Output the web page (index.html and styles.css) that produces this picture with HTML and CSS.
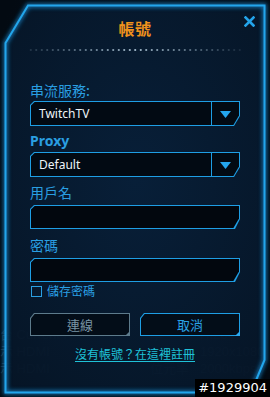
FILE: index.html
```html
<!DOCTYPE html>
<html>
<head>
<meta charset="utf-8">
<link rel="stylesheet" href="styles.css">
</head>
<body>
<div class="screen">
  <div class="backdrop">
    <div class="bg-row"><span>台 Current P</span><span>率</span><span>H.264</span></div>
    <div class="bg-row"><span>示 HDMI</span><span></span><span>1920x1080</span></div>
    <div class="bg-row"><span>示 HDMI</span><span>位元率</span><span>2000kbps</span></div>
  </div>

  <div class="dialog">
    <svg class="frame" width="262" height="390" viewBox="0 0 262 390">
      <defs>
        <filter id="glow" x="-10%" y="-10%" width="120%" height="120%">
          <feGaussianBlur stdDeviation="2.2"/>
        </filter>
        <radialGradient id="fill" cx="50%" cy="45%" r="70%">
          <stop offset="0" stop-color="#08203a"/>
          <stop offset="1" stop-color="#061628"/>
        </radialGradient>
      </defs>
      <polygon points="24,1.5 260.5,1.5 260.5,356 247,388.5 1.5,388.5 1.5,39" fill="url(#fill)" fill-opacity="0.93"/>
      <polygon points="24,1.5 260.5,1.5 260.5,356 247,388.5 1.5,388.5 1.5,39" fill="none" stroke="#1a8fd8" stroke-width="4" filter="url(#glow)" opacity="0.8"/>
      <polygon points="24,1.5 260.5,1.5 260.5,356 247,388.5 1.5,388.5 1.5,39" fill="none" stroke="#22a6ec" stroke-width="2"/>
    </svg>

    <button class="close" aria-label="close">
      <svg width="11" height="11" viewBox="0 0 11 11"><path d="M1.5 1.5 L9.5 9.5 M9.5 1.5 L1.5 9.5" stroke="#23a4ea" stroke-width="2.6" stroke-linecap="square"/></svg>
    </button>

    <div class="content">
      <h1 class="title">帳號</h1>
      <div class="dots"></div>

      <div class="form">
        <label class="label first">串流服務:</label>
        <div class="field">
          <div class="field-inner">
            <span class="value">TwitchTV</span>
            <span class="arrow-cell"><svg width="11" height="7" viewBox="0 0 11 7"><polygon points="0,0 11,0 5.5,7" fill="#24a6ee"/></svg></span>
          </div>
        </div>

        <label class="label bold">Proxy</label>
        <div class="field">
          <div class="field-inner">
            <span class="value">Default</span>
            <span class="arrow-cell"><svg width="11" height="7" viewBox="0 0 11 7"><polygon points="0,0 11,0 5.5,7" fill="#24a6ee"/></svg></span>
          </div>
        </div>

        <label class="label">用戶名</label>
        <div class="field input"><div class="field-inner"></div></div>

        <label class="label">密碼</label>
        <div class="field input"><div class="field-inner"></div></div>

        <div class="check-row">
          <span class="checkbox"></span>
          <span class="check-text">儲存密碼</span>
        </div>

        <div class="buttons">
          <div class="btn grey"><div class="btn-inner">連線</div></div>
          <div class="btn blue"><div class="btn-inner">取消</div></div>
        </div>

        <a class="link" href="#">沒有帳號？在這裡註冊</a>
      </div>
    </div>
  </div>

  <div class="stamp">#1929904</div>
</div>
</body>
</html>
```

FILE: styles.css
```css
html, body {
  margin: 0;
  padding: 0;
  background: #040b14;
}

.screen {
  position: relative;
  width: 270px;
  height: 397px;
  overflow: hidden;
  background: radial-gradient(ellipse at 60% 40%, #071526 0%, #030a12 80%);
  font-family: "Noto Sans CJK TC", "Noto Sans", sans-serif;
}

.backdrop {
  position: absolute;
  left: 0;
  top: 326px;
  width: 270px;
  display: flex;
  flex-direction: column;
}

.bg-row {
  height: 17px;
  display: grid;
  grid-template-columns: 150px 50px 70px;
  font-family: "Liberation Sans", "Noto Sans CJK TC", sans-serif;
  font-size: 13px;
  line-height: 17px;
  color: rgba(120, 150, 175, 0.22);
  white-space: nowrap;
  overflow: hidden;
}

.dialog {
  position: absolute;
  left: 4px;
  top: 4px;
  width: 262px;
  height: 390px;
}

.frame {
  position: absolute;
  left: 0;
  top: 0;
  overflow: visible;
}

.close {
  position: absolute;
  left: 240px;
  top: 12px;
  width: 11px;
  height: 11px;
  padding: 0;
  border: 0;
  background: none;
  display: flex;
}

.content {
  position: relative;
  display: flex;
  flex-direction: column;
  padding: 13px 26px 0 26px;
}

.title {
  margin: 0;
  height: 22px;
  font-size: 16px;
  line-height: 22px;
  font-weight: 700;
  text-align: center;
  color: #f0921c;
  letter-spacing: 0.5px;
}

.dots {
  margin: 10px -2px 0 -2px;
  height: 2px;
  background-image: radial-gradient(circle, #cfe8f8 0 0.9px, transparent 1.1px);
  background-size: 5.5px 2px;
  -webkit-mask-image: linear-gradient(90deg, rgba(0,0,0,0.15) 0%, rgba(0,0,0,0.9) 50%, rgba(0,0,0,0.1) 100%);
  mask-image: linear-gradient(90deg, rgba(0,0,0,0.15) 0%, rgba(0,0,0,0.9) 50%, rgba(0,0,0,0.1) 100%);
  opacity: 0.8;
}

.form {
  display: flex;
  flex-direction: column;
}

.label {
  display: block;
  height: 20px;
  font-size: 14px;
  line-height: 20px;
  color: #2a9fe2;
  margin: 5px 0 1px 0;
}

.label.first {
  margin-top: 29px;
}

.label.bold {
  font-family: "Noto Sans", "Noto Sans CJK TC", sans-serif;
  font-weight: 700;
}

.field {
  height: 25px;
  padding: 1px;
  box-sizing: border-box;
  background: #1e9ee4;
  clip-path: polygon(4px 0, 100% 0, 100% calc(100% - 10px), calc(100% - 6px) 100%, 0 100%, 0 4px);
}

.field.input {
  height: 24px;
  margin-top: 2px;
  clip-path: polygon(4px 0, 100% 0, 100% calc(100% - 10px), calc(100% - 5px) 100%, 0 100%, 0 4px);
}

.field-inner {
  height: 100%;
  display: flex;
  align-items: center;
  background: #020a13;
  clip-path: polygon(3.6px 0, 100% 0, 100% calc(100% - 9.6px), calc(100% - 5.6px) 100%, 0 100%, 0 3.6px);
}

.field.input .field-inner {
  background: #02070e;
}

.value {
  flex: 1;
  padding-left: 8px;
  font-family: "Noto Sans", sans-serif;
  font-size: 12px;
  color: #eef4f8;
}

.arrow-cell {
  width: 28px;
  height: 100%;
  border-left: 1px solid #1e9ee4;
  display: flex;
  align-items: center;
  justify-content: center;
  padding-top: 1px;
  box-sizing: border-box;
}

.field.input + .label {
  margin-top: 6px;
}

.check-row {
  display: flex;
  align-items: center;
  gap: 5px;
  margin-top: 3px;
  margin-left: 1px;
  height: 12px;
}

.checkbox {
  width: 9px;
  height: 9px;
  border: 1px solid #2a9fe2;
}

.check-text {
  font-size: 12px;
  line-height: 12px;
  color: #2a9fe2;
}

.buttons {
  display: flex;
  gap: 10px;
  margin-top: 16px;
}

.btn {
  position: relative;
  width: 100px;
  height: 23px;
  padding: 1px;
  box-sizing: border-box;
  clip-path: polygon(4px 0, 100% 0, 100% 100%, 0 100%, 0 5px);
}

.btn-inner {
  height: 100%;
  background: #030d18;
  clip-path: polygon(3.6px 0, 100% 0, 100% 100%, 0 100%, 0 4.6px);
  display: flex;
  align-items: center;
  justify-content: center;
  font-size: 13px;
}

.btn::after {
  content: "";
  position: absolute;
  right: 0;
  bottom: 0;
  width: 5px;
  height: 5px;
  clip-path: polygon(100% 0, 100% 100%, 0 100%);
}

.btn.grey { background: #5d7b8c; }
.btn.grey .btn-inner { color: #7a95a5; }
.btn.grey::after { background: #5d7b8c; }

.btn.blue { background: #1e9ee4; }
.btn.blue .btn-inner { color: #2aa2e6; }
.btn.blue::after { background: #2aa8f0; }

.link {
  align-self: center;
  margin-top: 10px;
  font-size: 12px;
  line-height: 16px;
  color: #1fc2d8;
  text-decoration: underline;
  text-underline-offset: 2px;
}

.stamp {
  position: absolute;
  right: 0;
  bottom: 0;
  padding: 0 3px 0 3px;
  height: 18px;
  background: #000;
  color: #fff;
  font-family: "DejaVu Sans", sans-serif;
  font-size: 13px;
  line-height: 18px;
}
```
